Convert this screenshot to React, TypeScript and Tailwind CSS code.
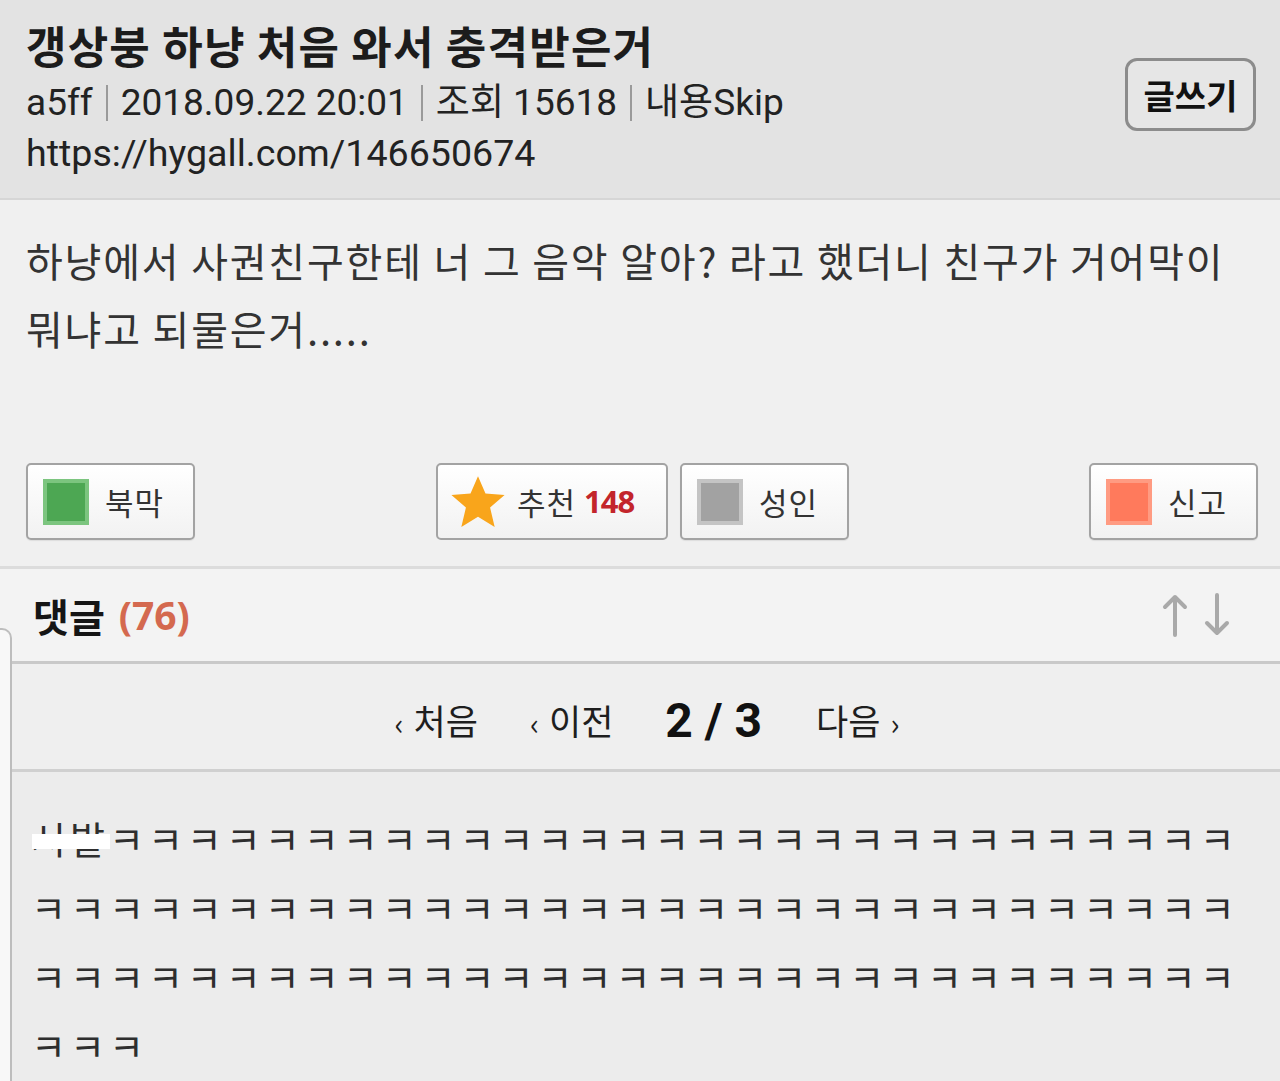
import React from 'react';

const K = 'ㅋ';

function ColorBox({ inner, outer }: { inner: string; outer: string }) {
  return (
    <span className={`block w-[46px] h-[46px] border-[4px] ${outer} ${inner}`} />
  );
}

function ActionButton({
  width,
  icon,
  children,
}: {
  width: string;
  icon: React.ReactNode;
  children: React.ReactNode;
}) {
  return (
    <div
      className={`${width} h-[77px] flex items-center gap-[16px] pl-[15px] border-2 border-[#a3a3a3] rounded-[5px] bg-gradient-to-b from-[#ffffff] to-[#f2f2f2] shadow-[0_1px_1px_rgba(0,0,0,0.08)]`}
    >
      {icon}
      <span className="text-[31px] tracking-[1px] text-[#333] leading-none">{children}</span>
    </div>
  );
}

function Star() {
  return (
    <svg width="58" height="56" viewBox="0 0 24 23">
      <path
        d="M12 0.8 L15.1 8 L23 8.6 L17 13.8 L18.9 21.8 L12 17.6 L5.1 21.8 L7 13.8 L1 8.6 L8.9 8 Z"
        fill="#f9a51b"
      />
    </svg>
  );
}

function Arrow({ down }: { down?: boolean }) {
  return (
    <svg width="26" height="44" viewBox="0 0 26 44" className={down ? 'rotate-180' : ''}>
      <path
        d="M13 42 V4 M3 14 L13 4 L23 14"
        stroke="#a9a9a9"
        strokeWidth="4"
        fill="none"
        strokeLinecap="round"
        strokeLinejoin="round"
      />
    </svg>
  );
}

export default function App() {
  const line1 = K.repeat(29);
  const line2 = K.repeat(31);
  const line3 = K.repeat(31);
  const line4 = K.repeat(3);

  return (
    <div className="relative w-[1280px] min-h-[1081px] overflow-hidden bg-[#f0f0f0] text-[#222] font-[Roboto,'Noto_Sans_CJK_KR',sans-serif]">
      {/* 글 헤더 */}
      <header className="h-[200px] bg-[#e3e3e3] border-b-2 border-[#d6d6d6] flex justify-between pl-[26px] pr-[24px] pt-[15px]">
        <div>
          <h1 className="text-[44px] font-bold leading-[60px] text-[#1c1c1c] font-['Noto_Sans_CJK_KR',sans-serif] tracking-[1.2px]">
            갱상붕 하냥 처음 와서 충격받은거
          </h1>
          <div className="text-[37px] leading-[56px] text-[#222] flex items-center">
            <span>a5ff</span>
            <span className="mx-[13px] w-[2px] h-[36px] bg-[#9a9a9a]" />
            <span>2018.09.22 20:01</span>
            <span className="mx-[13px] w-[2px] h-[36px] bg-[#9a9a9a]" />
            <span>조회 15618</span>
            <span className="mx-[13px] w-[2px] h-[36px] bg-[#9a9a9a]" />
            <span>내용Skip</span>
          </div>
          <div className="text-[37.6px] leading-[44px] text-[#222]">https://hygall.com/146650674</div>
        </div>
        <div className="pt-[43px]">
          <button className="w-[131px] h-[73px] border-[3px] border-[#8c8c8c] rounded-[12px] bg-[#e6e6e6] text-[34px] font-semibold text-[#111] font-['Noto_Sans_CJK_KR',sans-serif]">
            글쓰기
          </button>
        </div>
      </header>

      {/* 본문 */}
      <div className="h-[263px] pl-[26px] pt-[26px] text-[40px] leading-[68px] tracking-[1.8px] text-[#333] font-['Noto_Sans_CJK_KR',sans-serif]">
        <p className="whitespace-nowrap">하냥에서 사권친구한테 너 그 음악 알아? 라고 했더니 친구가 거어막이</p>
        <p className="whitespace-nowrap">뭐냐고 되물은거.....</p>
      </div>

      {/* 버튼 */}
      <div className="flex items-center pl-[26px] pr-[22px] font-['Noto_Sans_CJK_KR',sans-serif]">
        <ActionButton width="w-[169px]" icon={<ColorBox outer="border-[#7cc57f]" inner="bg-[#4da753]" />}>
          북막
        </ActionButton>
        <div className="ml-[241px] w-[232px] h-[77px] flex items-center pl-[11px] border-2 border-[#a3a3a3] rounded-[5px] bg-gradient-to-b from-[#ffffff] to-[#f2f2f2]">
          <Star />
          <span className="ml-[10px] text-[31px] tracking-[1px] text-[#333] leading-none">추천</span>
          <span className="ml-[8px] text-[31px] font-bold text-[#c3252b] leading-none font-['Noto_Sans',sans-serif] tracking-[-1px]">
            148
          </span>
        </div>
        <div className="ml-[12px]">
          <ActionButton width="w-[169px]" icon={<ColorBox outer="border-[#c4c4c4]" inner="bg-[#a2a2a2]" />}>
            성인
          </ActionButton>
        </div>
        <div className="ml-auto">
          <ActionButton width="w-[169px]" icon={<ColorBox outer="border-[#ff9b82]" inner="bg-[#ff7a5c]" />}>
            신고
          </ActionButton>
        </div>
      </div>

      {/* 댓글 헤더 */}
      <div className="mt-[26px] border-t-[3px] border-[#dcdcdc] bg-[#f3f3f3] h-[95px] flex items-center justify-between pl-[33px] pr-[50px]">
        <div className="flex items-center text-[39px] font-bold font-['Noto_Sans_CJK_KR',sans-serif]">
          <span className="text-[#151515]">댓글</span>
          <span className="ml-[14px] text-[#d4694f] font-['Noto_Sans',sans-serif]">(76)</span>
        </div>
        <div className="flex items-center gap-[16px]">
          <Arrow />
          <Arrow down />
        </div>
      </div>

      {/* 페이지 */}
      <div className="border-t-[3px] border-[#c9c9c9] h-[108px] bg-[#efefef] flex items-center justify-center pt-[8px] text-[35px] text-[#1e1e1e] font-['Noto_Sans_CJK_KR',sans-serif]">
        <span className="flex items-center ml-[14px]">
          <span className="text-[30px] mr-[10px] mt-[4px]">‹</span>처음
        </span>
        <span className="flex items-center ml-[52px]">
          <span className="text-[30px] mr-[10px] mt-[4px]">‹</span>이전
        </span>
        <span className="ml-[52px] text-[48px] leading-none font-bold font-[Roboto,sans-serif] text-[#111]">2 / 3</span>
        <span className="flex items-center ml-[54px]">
          다음<span className="text-[30px] ml-[10px] mt-[4px]">›</span>
        </span>
      </div>

      {/* 댓글 내용 */}
      <div className="border-t-[3px] border-[#d0d0d0] bg-[#ececec] pl-[31px] pt-[31px] pb-[20px] text-[38px] leading-[69px] text-[#2e2e2e] tracking-[4px] font-['Noto_Sans_CJK_KR',sans-serif]">
        <p className="whitespace-nowrap">
          <span className="relative">
            시발
            <span className="absolute left-[1px] top-[24px] w-[78px] h-[15px] bg-white" />
          </span>
          {line1}
        </p>
        <p className="whitespace-nowrap">{line2}</p>
        <p className="whitespace-nowrap">{line3}</p>
        <p className="whitespace-nowrap">{line4}</p>
      </div>

      {/* 왼쪽 패널 가장자리 */}
      <div className="absolute left-0 top-[628px] bottom-0 w-[12px] border-t-2 border-r-2 border-[#bdbdbd] rounded-tr-[10px] bg-[#f8f8f8]" />
    </div>
  );
}
